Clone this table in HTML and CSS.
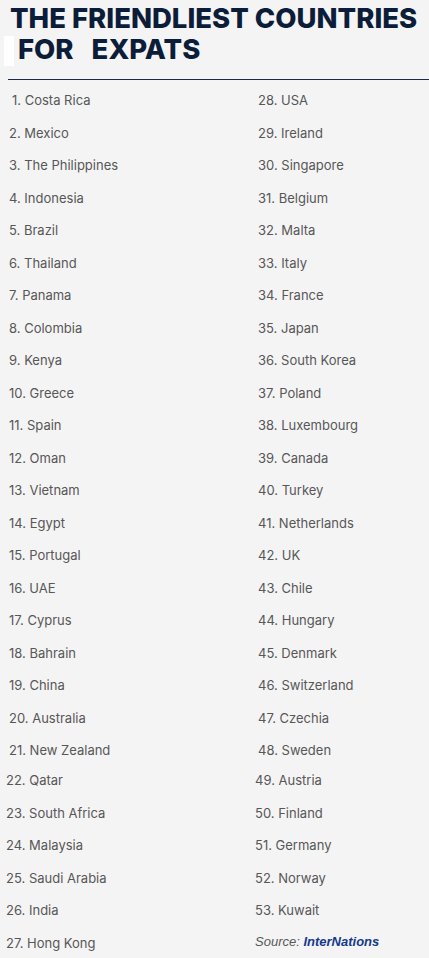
FILE: index.html
```html
<!DOCTYPE html>
<html>
<head>
<meta charset="utf-8">
<link rel="stylesheet" href="styles.css">
</head>
<body>
<header class="head">
  <h1 class="title">
    <span class="line1">THE FRIENDLIEST COUNTRIES</span>
    <span class="line2"><span class="mark"></span>FOR&nbsp;&nbsp; EXPATS</span>
  </h1>
</header>
<div class="rule"></div>
<main class="list">
  <ul class="col left">
    <li class="in3">1. Costa Rica</li>
    <li>2. Mexico</li>
    <li>3. The Philippines</li>
    <li>4. Indonesia</li>
    <li>5. Brazil</li>
    <li>6. Thailand</li>
    <li>7. Panama</li>
    <li>8. Colombia</li>
    <li>9. Kenya</li>
    <li>10. Greece</li>
    <li>11. Spain</li>
    <li>12. Oman</li>
    <li>13. Vietnam</li>
    <li>14. Egypt</li>
    <li>15. Portugal</li>
    <li>16. UAE</li>
    <li>17. Cyprus</li>
    <li>18. Bahrain</li>
    <li>19. China</li>
    <li>20. Australia</li>
    <li>21. New Zealand</li>
    <li class="out shift">22. Qatar</li>
    <li class="out">23. South Africa</li>
    <li class="out">24. Malaysia</li>
    <li class="out">25. Saudi Arabia</li>
    <li class="out">26. India</li>
    <li class="out">27. Hong Kong</li>
  </ul>
  <ul class="col right">
    <li>28. USA</li>
    <li>29. Ireland</li>
    <li>30. Singapore</li>
    <li>31. Belgium</li>
    <li>32. Malta</li>
    <li>33. Italy</li>
    <li>34. France</li>
    <li>35. Japan</li>
    <li>36. South Korea</li>
    <li>37. Poland</li>
    <li>38. Luxembourg</li>
    <li>39. Canada</li>
    <li>40. Turkey</li>
    <li>41. Netherlands</li>
    <li>42. UK</li>
    <li>43. Chile</li>
    <li>44. Hungary</li>
    <li>45. Denmark</li>
    <li>46. Switzerland</li>
    <li>47. Czechia</li>
    <li>48. Sweden</li>
    <li class="out shift">49. Austria</li>
    <li class="out">50. Finland</li>
    <li class="out">51. Germany</li>
    <li class="out">52. Norway</li>
    <li class="out">53. Kuwait</li>
    <li class="out source">Source: <b>InterNations</b></li>
  </ul>
</main>
</body>
</html>
```
FILE: styles.css
```css
html, body {
  margin: 0;
  padding: 0;
  background: #f4f4f4;
}
body {
  width: 429px;
  height: 958px;
  overflow: hidden;
  font-family: Inter, "Noto Sans", sans-serif;
}
.head {
  padding-top: 3px;
}
.title {
  margin: 0;
  font-family: Inter, sans-serif;
  font-weight: 800;
  font-size: 27.5px;
  line-height: 31px;
  color: #0c1d3a;
  letter-spacing: 0;
}
.line1 {
  display: block;
  padding-left: 10px;
  white-space: nowrap;
}
.line2 {
  display: block;
  padding-left: 4px;
  white-space: nowrap;
}
.mark {
  display: inline-block;
  width: 10px;
  height: 30px;
  background: #ffffff;
  vertical-align: -7px;
  margin-right: 4px;
}
.rule {
  margin: 13px 0 0 8px;
  height: 1px;
  background: #1b2a45;
}
.list {
  display: flex;
  padding-top: 4px;
}
.col {
  list-style: none;
  margin: 0;
  padding: 0;
  display: flex;
  flex-direction: column;
}
.left {
  width: 240px;
  padding-left: 9px;
}
.right {
  padding-left: 9px;
}
.col li {
  height: 32.5px;
  line-height: 32.5px;
  font-size: 13px;
  color: #575757;
  white-space: nowrap;
}
.col li.in3 {
  padding-left: 3px;
}
.col li.out {
  margin-left: -3px;
}
.col li.shift {
  margin-top: -2.5px;
}
.source {
  font-family: "Liberation Sans", Arial, sans-serif;
  font-size: 14.6px;
  font-style: italic;
  color: #555;
  margin-top: -1px;
}
.source b {
  color: #163a8c;
  font-weight: 700;
}
```
